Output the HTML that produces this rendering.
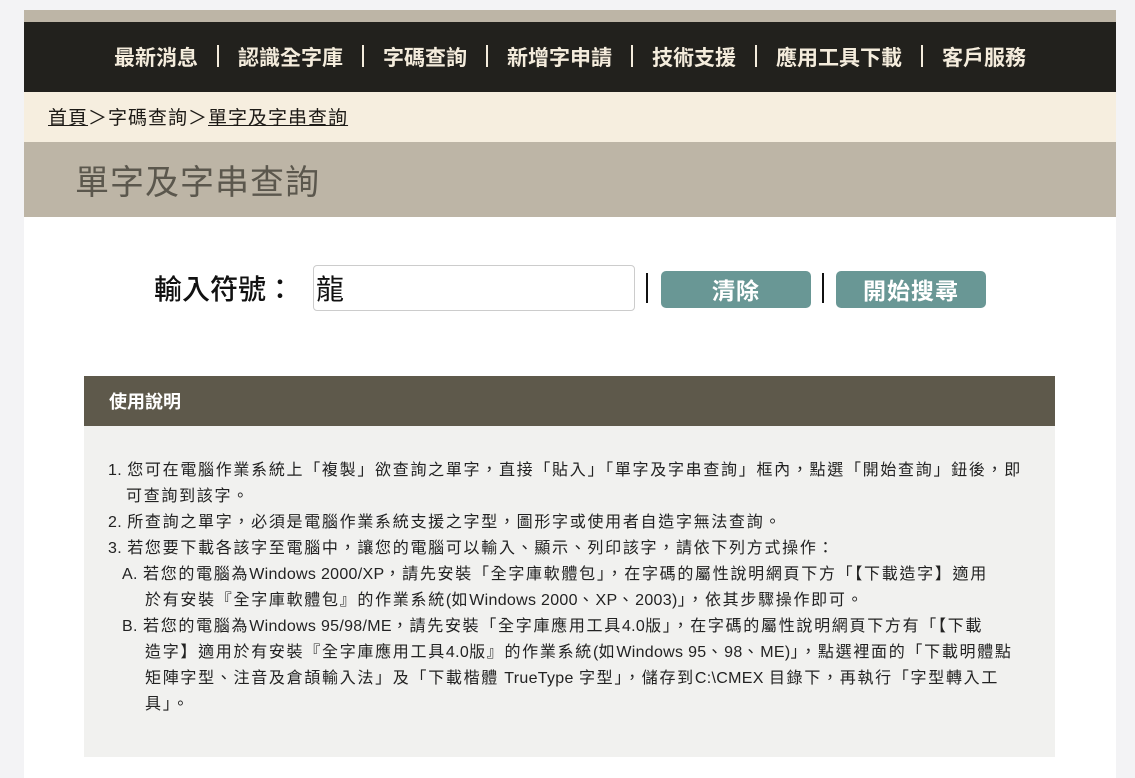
<!DOCTYPE html>
<html><head><meta charset="utf-8"><style>
*{margin:0;padding:0;box-sizing:border-box}
body{width:1135px;height:778px;overflow:hidden;background:#f3f3f5;font-family:"Noto Sans CJK TC","Liberation Sans",sans-serif;position:relative}
.a{position:absolute}
.wrap{left:24px;top:10px;width:1092px;height:768px;background:#fff}
.nav{left:24px;top:22px;width:1092px;height:70px;background:#22211d;color:#f4ecdc;font-size:21px;text-align:center;line-height:70px;font-weight:bold;white-space:nowrap}
.nav span.s{display:inline-block;width:2px;height:22px;background:#f4ecdc;margin:0 19px;vertical-align:middle;position:relative;top:-3px}
.bc{left:24px;top:92px;width:1092px;height:50px;background:#f6eedf;font-size:19px;line-height:50px;padding-left:24px;color:#1d1a16;letter-spacing:1px}
.bc u{text-decoration:underline}
.tt{left:24px;top:142px;width:1092px;height:75px;background:#bdb5a6;font-size:34px;line-height:75px;padding-left:51px;color:#5b574d;letter-spacing:1px}
.btn{background:#699795;color:#fff;font-size:23px;font-weight:bold;text-align:center;line-height:37px;border-radius:5px;height:37px;top:271px;letter-spacing:1px}
.li{font-size:16px;color:#222;white-space:nowrap;letter-spacing:1.7px}
.li div{height:26px;line-height:26px;overflow:visible}
.li .w{font-family:"Liberation Sans",sans-serif;letter-spacing:0.3px}
</style></head><body>
<div class="a wrap"></div>
<div class="a" style="left:24px;top:10px;width:1092px;height:12px;background:#bdb5a6"></div>
<div class="a nav">最新消息<span class="s"></span>認識全字庫<span class="s"></span>字碼查詢<span class="s"></span>新增字申請<span class="s"></span>技術支援<span class="s"></span>應用工具下載<span class="s"></span>客戶服務</div>
<div class="a bc"><u>首頁</u>＞字碼查詢＞<u>單字及字串查詢</u></div>
<div class="a tt">單字及字串查詢</div>
<div class="a" style="left:154px;top:268px;font-size:28px;line-height:40px;color:#111;font-weight:500">輸入符號：</div>
<div class="a" style="left:313px;top:265px;width:322px;height:46px;border:1px solid #ccc;border-radius:4px;font-size:28px;line-height:44px;padding-left:2px;color:#111">龍</div>
<div class="a" style="left:646px;top:273px;width:2px;height:30px;background:#111"></div>
<div class="a btn" style="left:661px;width:150px">清除</div>
<div class="a" style="left:822px;top:273px;width:2px;height:30px;background:#111"></div>
<div class="a btn" style="left:836px;width:150px">開始搜尋</div>
<div class="a" style="left:84px;top:376px;width:971px;height:50px;background:#5e594b;color:#fff;font-size:18px;font-weight:bold;line-height:50px;padding-left:25px">使用說明</div>
<div class="a" style="left:84px;top:426px;width:971px;height:331px;background:#f1f1ef"></div>
<div class="a li" style="left:108px;top:455px">
<div><span class="w">1.</span> 您可在電腦作業系統上「複製」欲查詢之單字，直接「貼入」「單字及字串查詢」框內，點選「開始查詢」鈕後，即</div>
<div style="padding-left:18px">可查詢到該字。</div>
<div><span class="w">2.</span> 所查詢之單字，必須是電腦作業系統支援之字型，圖形字或使用者自造字無法查詢。</div>
<div><span class="w">3.</span> 若您要下載各該字至電腦中，讓您的電腦可以輸入、顯示、列印該字，請依下列方式操作：</div>
<div style="padding-left:14px"><span class="w">A.</span> 若您的電腦為<span class="w">Windows 2000/XP</span>，請先安裝「全字庫軟體包」，在字碼的屬性說明網頁下方「【下載造字】適用</div>
<div style="padding-left:37px">於有安裝『全字庫軟體包』的作業系統<span class="w">(</span>如<span class="w">Windows 2000</span>、<span class="w">XP</span>、<span class="w">2003)</span>」，依其步驟操作即可。</div>
<div style="padding-left:14px"><span class="w">B.</span> 若您的電腦為<span class="w">Windows 95/98/ME</span>，請先安裝「全字庫應用工具<span class="w">4.0</span>版」，在字碼的屬性說明網頁下方有「【下載</div>
<div style="padding-left:37px">造字】適用於有安裝『全字庫應用工具<span class="w">4.0</span>版』的作業系統<span class="w">(</span>如<span class="w">Windows 95</span>、<span class="w">98</span>、<span class="w">ME)</span>」，點選裡面的「下載明體點</div>
<div style="padding-left:37px">矩陣字型、注音及倉頡輸入法」及「下載楷體 <span class="w">TrueType</span> 字型」，儲存到<span class="w">C:\CMEX</span> 目錄下，再執行「字型轉入工</div>
<div style="padding-left:37px">具」。</div>
</div>
</body></html>
